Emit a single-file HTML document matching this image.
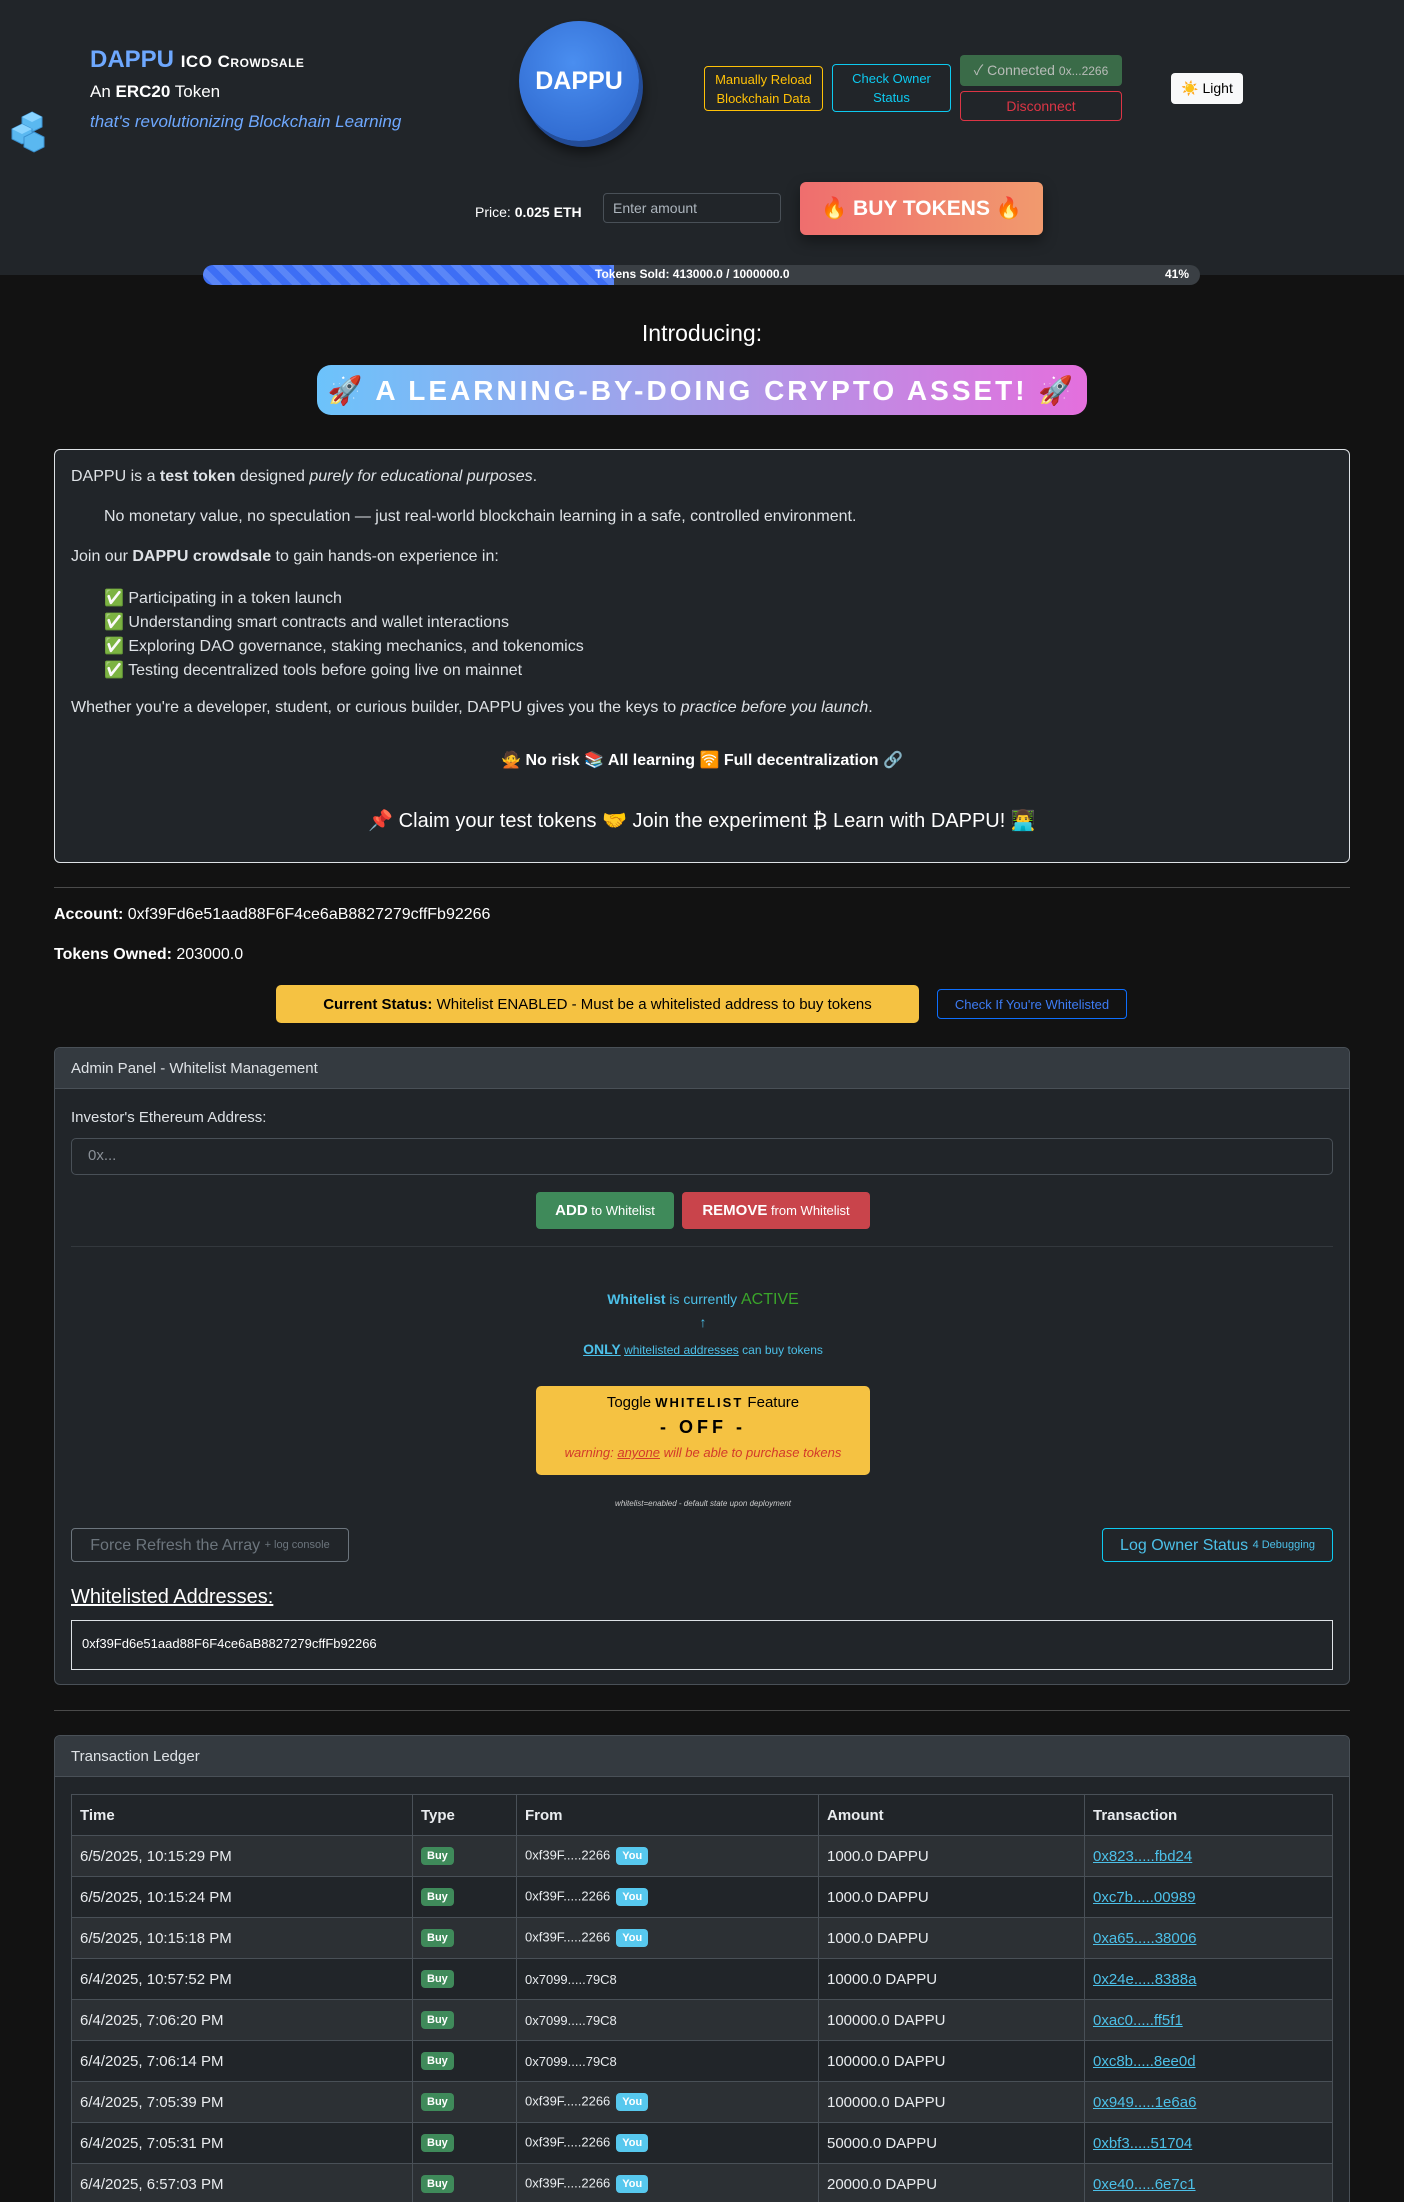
<!DOCTYPE html>
<html><head><meta charset="utf-8"><style>
*{box-sizing:border-box;margin:0;padding:0}
html{overflow:hidden;width:1404px;height:2202px}
body{width:1404px;height:2202px;background:#121212;color:#dee2e6;font-family:"Liberation Sans","Noto Sans CJK SC",sans-serif;position:relative;overflow:hidden;font-size:16px}
.a{position:absolute}
.hdr{left:0;top:0;width:1404px;height:275px;background:#212529}
.btn{position:absolute;display:flex;align-items:center;justify-content:center;text-align:center;border-radius:4px;font-size:13px;line-height:19px}
.c{text-align:center;width:1404px;left:0}
.card{position:absolute;left:54px;width:1296px;background:#212529;border:1px solid #495057;border-radius:6px;overflow:hidden}
.ch{height:41px;background:#343a40;border-bottom:1px solid #495057;padding:0 16px;line-height:41px;font-size:15px;color:#dee2e6}
table{border-collapse:collapse;position:absolute;left:16px;top:58px;width:1262px;font-size:15px}
td,th{border:1px solid #495057;height:41px;padding:0 8px;text-align:left;color:#e9ecef}
th{font-weight:bold}
tr.s td{background:#2c3034}
.b{display:inline-block;background:#3f8a5a;color:#fff;font-size:11px;font-weight:bold;padding:3px 6px;border-radius:4px;vertical-align:middle}
.y{display:inline-block;background:#57c8ee;color:#fff;font-size:11px;font-weight:bold;padding:3px 6px;border-radius:4px;margin-left:6px;vertical-align:middle}
.f{font-size:13px}
a{color:#4cc0e8;text-decoration:underline}
</style></head><body>
<div class="a hdr"></div>
<svg class="a" style="left:10px;top:110px" width="44" height="44" viewBox="0 0 44 44"><g fill="#5ab8f0" stroke="#3a90d0" stroke-width="1"><path d="M22 2l10 5v10l-10 5-10-5V7z"/><path d="M12 14l10 5v10l-10 5-10-5V19z"/><path d="M24 22l10 5v10l-10 5-10-5V27z"/></g><path d="M22 2l10 5-10 5-10-5z M12 14l10 5-10 5-10-5z" fill="#8ad4ff"/></svg>
<div class="a" style="left:90px;top:46px;font-size:24px;font-weight:bold;color:#6ea8fe">DAPPU <span style="color:#fff;font-size:17px;font-variant:small-caps;letter-spacing:.5px">ICO Crowdsale</span></div>
<div class="a" style="left:90px;top:82px;font-size:17px;color:#fff">An <b>ERC20</b> Token</div>
<div class="a" style="left:90px;top:112px;font-size:17px;font-style:italic;color:#6ea8fe">that's revolutionizing Blockchain Learning</div>
<div class="a" style="left:519px;top:21px;width:120px;height:120px;border-radius:50%;background:radial-gradient(circle at 45% 35%,#4a8ef0,#2a62c8);box-shadow:4px 6px 0 #234c98,4px 12px 12px rgba(0,0,0,.5);display:flex;align-items:center;justify-content:center;color:#fff;font-weight:bold;font-size:25px">DAPPU</div>
<div class="btn" style="left:704px;top:66px;width:119px;height:45px;border:1px solid #ffc107;color:#ffc107">Manually Reload<br>Blockchain Data</div>
<div class="btn" style="left:832px;top:64px;width:119px;height:48px;border:1px solid #0dcaf0;color:#0dcaf0">Check Owner<br>Status</div>
<div class="btn" style="left:960px;top:55px;width:162px;height:31px;background:#3a6b48;color:#b8bcb8;font-size:14px;align-items:baseline;padding-top:6px">✓ Connected <span style="font-size:12px;margin-left:4px">0x...2266</span></div>
<div class="btn" style="left:960px;top:91px;width:162px;height:30px;border:1px solid #dc3545;color:#dc3545;font-size:14px">Disconnect</div>
<div class="btn" style="left:1171px;top:73px;width:72px;height:31px;background:#f8f9fa;color:#000;font-size:14px">☀️ Light</div>
<div class="a" style="left:475px;top:204px;font-size:14px;color:#fff">Price: <b>0.025 ETH</b></div>
<div class="a" style="left:603px;top:193px;width:178px;height:30px;border:1px solid #495057;border-radius:4px;background:#212529;color:#adb5bd;font-size:14px;padding:6px 9px">Enter amount</div>
<div class="btn" style="left:800px;top:182px;width:243px;height:53px;background:linear-gradient(90deg,#ef6e6e,#f19a6e);color:#fff;font-weight:bold;font-size:21px;border-radius:6px;box-shadow:0 6px 14px rgba(0,0,0,.4)">🔥 BUY TOKENS 🔥</div>
<div class="a" style="left:203px;top:265px;width:997px;height:20px;border-radius:10px;background:#3a3f44;overflow:hidden"><div style="width:411px;height:20px;background:repeating-linear-gradient(45deg,#3d6ef5 0 7px,#5a86f7 7px 14px)"></div></div>
<div class="a" style="left:595px;top:267px;font-size:12px;font-weight:bold;color:#fff">Tokens Sold: 413000.0 / 1000000.0</div>
<div class="a" style="left:1165px;top:267px;font-size:12px;font-weight:bold;color:#fff">41%</div>

<div class="a c" style="top:320px;font-size:23px;color:#fff">Introducing:</div>
<div class="btn" style="left:317px;top:365px;width:770px;height:50px;border-radius:14px;background:linear-gradient(90deg,#6cc3fb,#a99ce8,#e46fdd);color:#fff;font-weight:bold;font-size:28px;letter-spacing:3px">🚀 A LEARNING-BY-DOING CRYPTO ASSET! 🚀</div>

<div class="a" style="left:54px;top:449px;width:1296px;height:414px;background:#212529;border:1px solid #dee2e6;border-radius:6px"></div>
<div class="a" style="left:71px;top:468px;font-size:16px">DAPPU is a <b>test token</b> designed <i>purely for educational purposes</i>.</div>
<div class="a" style="left:104px;top:508px;font-size:16px">No monetary value, no speculation — just real-world blockchain learning in a safe, controlled environment.</div>
<div class="a" style="left:71px;top:548px;font-size:16px">Join our <b>DAPPU crowdsale</b> to gain hands-on experience in:</div>
<div class="a" style="left:104px;top:587px;font-size:16px;line-height:24px">✅ Participating in a token launch<br>✅ Understanding smart contracts and wallet interactions<br>✅ Exploring DAO governance, staking mechanics, and tokenomics<br>✅ Testing decentralized tools before going live on mainnet</div>
<div class="a" style="left:71px;top:699px;font-size:16px">Whether you're a developer, student, or curious builder, DAPPU gives you the keys to <i>practice before you launch</i>.</div>
<div class="a c" style="top:750px;font-size:16px;font-weight:bold;color:#fff">🙅 No risk 📚 All learning 🛜 Full decentralization 🔗</div>
<div class="a c" style="top:808px;font-size:20px;color:#fff">📌 Claim your test tokens 🤝 Join the experiment ₿ Learn with DAPPU! 👨‍💻</div>

<div class="a" style="left:54px;top:887px;width:1296px;height:1px;background:#4a4a4a"></div>
<div class="a" style="left:54px;top:906px;font-size:16px;color:#fff"><b>Account:</b> 0xf39Fd6e51aad88F6F4ce6aB8827279cffFb92266</div>
<div class="a" style="left:54px;top:946px;font-size:16px;color:#fff"><b>Tokens Owned:</b> 203000.0</div>
<div class="btn" style="left:276px;top:985px;width:643px;height:38px;background:#f5c242;color:#000;font-size:15px;border-radius:5px"><b>Current Status:</b>&nbsp;Whitelist ENABLED - Must be a whitelisted address to buy tokens</div>
<div class="btn" style="left:937px;top:989px;width:190px;height:30px;border:1px solid #0d6efd;color:#3d7cf5;font-size:13px">Check If You're Whitelisted</div>

<div class="card" style="top:1047px;height:638px">
<div class="ch">Admin Panel - Whitelist Management</div>
<div class="a" style="left:16px;top:61px;font-size:15px">Investor's Ethereum Address:</div>
<div class="a" style="left:16px;top:90px;width:1262px;height:37px;border:1px solid #495057;border-radius:5px;padding:8px 16px;color:#8a9097;font-size:15px">0x...</div>
<div class="btn" style="left:481px;top:144px;width:138px;height:37px;background:#3f8a5a;color:#fff;font-size:13px"><b style="font-size:15px">ADD</b>&nbsp;to Whitelist</div>
<div class="btn" style="left:627px;top:144px;width:188px;height:37px;background:#c9444b;color:#fff;font-size:13px"><b style="font-size:15px">REMOVE</b>&nbsp;from Whitelist</div>
<div class="a" style="left:16px;top:198px;width:1262px;height:1px;background:#33383d"></div>
<div class="a" style="left:0;width:1296px;text-align:center;top:243px;font-size:14px;color:#4cc0e8"><b>Whitelist</b> is currently <span style="color:#3aa52a;font-size:16px">ACTIVE</span></div>
<div class="a" style="left:0;width:1296px;text-align:center;top:266px;font-size:14px;color:#4cc0e8">↑</div>
<div class="a" style="left:0;width:1296px;text-align:center;top:293px;font-size:12px;color:#4cc0e8"><b style="font-size:14px;text-decoration:underline">ONLY</b> <u>whitelisted addresses</u> can buy tokens</div>
<div class="a" style="left:481px;top:338px;width:334px;height:89px;background:#f5c242;border-radius:5px;text-align:center;color:#000">
<div style="margin-top:8px;font-size:15px">Toggle <b style="letter-spacing:2px;font-size:13px">WHITELIST</b> Feature</div>
<div style="font-size:18px;font-weight:bold;letter-spacing:4px;margin-top:6px">- OFF -</div>
<div style="font-size:13px;font-style:italic;color:#d33a2a;margin-top:7px">warning: <u>anyone</u> will be able to purchase tokens</div></div>
<div class="a" style="left:0;width:1296px;text-align:center;top:451px;font-size:8px;font-style:italic;color:#ccc">whitelist=enabled - default state upon deployment</div>
<div class="btn" style="left:16px;top:480px;width:278px;height:34px;border:1px solid #6c757d;color:#6c757d;font-size:16px">Force Refresh the Array&nbsp;<span style="font-size:11px">+ log console</span></div>
<div class="btn" style="left:1047px;top:480px;width:231px;height:34px;border:1px solid #0dcaf0;color:#4cc0e8;font-size:16px">Log Owner Status&nbsp;<span style="font-size:11px">4 Debugging</span></div>
<div class="a" style="left:16px;top:538px;font-size:20px;color:#fff;text-decoration:underline">Whitelisted Addresses:</div>
<div class="a" style="left:16px;top:572px;width:1262px;height:50px;border:1px solid #dee2e6;padding:15px 10px;font-size:13px;color:#fff">0xf39Fd6e51aad88F6F4ce6aB8827279cffFb92266</div>
</div>

<div class="a" style="left:54px;top:1710px;width:1296px;height:1px;background:#4a4a4a"></div>
<div class="card" style="top:1735px;height:520px">
<div class="ch">Transaction Ledger</div>
<table>
<colgroup><col style="width:341px"><col style="width:104px"><col style="width:302px"><col style="width:266px"><col></colgroup>
<tr><th>Time</th><th>Type</th><th>From</th><th>Amount</th><th>Transaction</th></tr>
<tr class="s"><td>6/5/2025, 10:15:29 PM</td><td><span class="b">Buy</span></td><td class="f">0xf39F.....2266<span class="y">You</span></td><td>1000.0 DAPPU</td><td><a>0x823.....fbd24</a></td></tr>
<tr><td>6/5/2025, 10:15:24 PM</td><td><span class="b">Buy</span></td><td class="f">0xf39F.....2266<span class="y">You</span></td><td>1000.0 DAPPU</td><td><a>0xc7b.....00989</a></td></tr>
<tr class="s"><td>6/5/2025, 10:15:18 PM</td><td><span class="b">Buy</span></td><td class="f">0xf39F.....2266<span class="y">You</span></td><td>1000.0 DAPPU</td><td><a>0xa65.....38006</a></td></tr>
<tr><td>6/4/2025, 10:57:52 PM</td><td><span class="b">Buy</span></td><td class="f">0x7099.....79C8</td><td>10000.0 DAPPU</td><td><a>0x24e.....8388a</a></td></tr>
<tr class="s"><td>6/4/2025, 7:06:20 PM</td><td><span class="b">Buy</span></td><td class="f">0x7099.....79C8</td><td>100000.0 DAPPU</td><td><a>0xac0.....ff5f1</a></td></tr>
<tr><td>6/4/2025, 7:06:14 PM</td><td><span class="b">Buy</span></td><td class="f">0x7099.....79C8</td><td>100000.0 DAPPU</td><td><a>0xc8b.....8ee0d</a></td></tr>
<tr class="s"><td>6/4/2025, 7:05:39 PM</td><td><span class="b">Buy</span></td><td class="f">0xf39F.....2266<span class="y">You</span></td><td>100000.0 DAPPU</td><td><a>0x949.....1e6a6</a></td></tr>
<tr><td>6/4/2025, 7:05:31 PM</td><td><span class="b">Buy</span></td><td class="f">0xf39F.....2266<span class="y">You</span></td><td>50000.0 DAPPU</td><td><a>0xbf3.....51704</a></td></tr>
<tr class="s"><td>6/4/2025, 6:57:03 PM</td><td><span class="b">Buy</span></td><td class="f">0xf39F.....2266<span class="y">You</span></td><td>20000.0 DAPPU</td><td><a>0xe40.....6e7c1</a></td></tr>
</table>
</div>
</body></html>
